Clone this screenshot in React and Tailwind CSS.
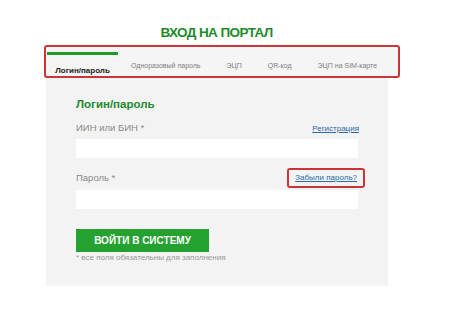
import React from "react";

const tabs = ["Одноразовый пароль", "ЭЦП", "QR-код", "ЭЦП на SIM-карте"];

export default function App() {
  return (
    <div className="w-[450px] h-[320px] bg-white overflow-hidden font-['Liberation_Sans',Arial,sans-serif]">
      {/* Заголовок */}
      <h1 className="pt-[25px] h-[45px] pr-[17px] text-center text-[13.5px] leading-[16px] font-bold text-[#1f8a2c] tracking-[-0.6px]">
        ВХОД НА ПОРТАЛ
      </h1>

      {/* Вкладки */}
      <div className="ml-[44px] w-[356px] h-[33px] border-2 border-[#c9363a] rounded-[3px] bg-[#f5f5f5] flex items-start">
        <div className="ml-[1px] w-[71px] h-full flex flex-col items-center">
          <div className="w-full h-[3px] mt-[5px] bg-[#1e9a2a]" />
          <span className="mt-[11px] text-[8px] leading-[10px] font-semibold text-[#222]">
            Логин/пароль
          </span>
        </div>
        <div className="ml-[13px] mt-[14px] flex gap-[26px] text-[7px] leading-[10px] text-[#808080]">
          {tabs.map((t) => (
            <span key={t}>{t}</span>
          ))}
        </div>
      </div>

      {/* Форма */}
      <div className="ml-[46px] w-[342px] h-[208px] bg-[#f3f3f3] px-[30px] pt-[19px]">
        <h2 className="text-[11.5px] leading-[14px] font-bold text-[#218a2e]">
          Логин/пароль
        </h2>

        <div className="mt-[11px] flex items-end justify-between">
          <span className="text-[9.5px] leading-[12px] text-[#8a8a8a]">ИИН или БИН *</span>
          <a className="text-[8px] leading-[10px] text-[#2a6aa8] underline mr-[-1px]">Регистрация</a>
        </div>
        <div className="mt-[5px] h-[19px] bg-white" />

        <div className="mt-[10px] h-[20px] flex items-center justify-between">
          <span className="text-[9.5px] leading-[12px] text-[#8a8a8a]">Пароль *</span>
          <a className="mr-[-7px] px-[6px] h-[20px] flex items-center border-2 border-[#c9363a] rounded-[3px] text-[8px] leading-[10px] text-[#2a6aa8] underline">
            Забыли пароль?
          </a>
        </div>
        <div className="mt-[2px] h-[19px] bg-white" />

        <button className="mt-[20px] w-[133px] h-[23px] bg-[#24a12e] text-white text-[10px] font-bold leading-[12px]">
          ВОЙТИ В СИСТЕМУ
        </button>
        <p className="text-[8px] leading-[10px] text-[#999] mt-[1px]">
          * все поля обязательны для заполнения
        </p>
      </div>
    </div>
  );
}
